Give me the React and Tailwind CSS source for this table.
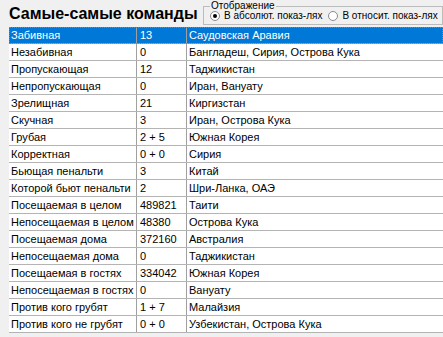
const rows = [
  ["Забивная", "13", "Саудовская Аравия"],
  ["Незабивная", "0", "Бангладеш, Сирия, Острова Кука"],
  ["Пропускающая", "12", "Таджикистан"],
  ["Непропускающая", "0", "Иран, Вануату"],
  ["Зрелищная", "21", "Киргизстан"],
  ["Скучная", "3", "Иран, Острова Кука"],
  ["Грубая", "2 + 5", "Южная Корея"],
  ["Корректная", "0 + 0", "Сирия"],
  ["Бьющая пенальти", "3", "Китай"],
  ["Которой бьют пенальти", "2", "Шри-Ланка, ОАЭ"],
  ["Посещаемая в целом", "489821", "Таити"],
  ["Непосещаемая в целом", "48380", "Острова Кука"],
  ["Посещаемая дома", "372160", "Австралия"],
  ["Непосещаемая дома", "0", "Таджикистан"],
  ["Посещаемая в гостях", "334042", "Южная Корея"],
  ["Непосещаемая в гостях", "0", "Вануату"],
  ["Против кого грубят", "1 + 7", "Малайзия"],
  ["Против кого не грубят", "0 + 0", "Узбекистан, Острова Кука"],
];

function Radio({ checked, label }) {
  return (
    <label className="flex items-center gap-[4px] whitespace-nowrap">
      <span className="shrink-0 w-[10px] h-[10px] rounded-full border border-[#8a8a8a] bg-white flex items-center justify-center">
        {checked && <span className="w-[4px] h-[4px] rounded-full bg-black" />}
      </span>
      <span>{label}</span>
    </label>
  );
}

export default function App() {
  return (
    <div className="w-[443px] h-[337px] bg-[#f0f0f0] overflow-hidden font-['Liberation_Sans',Arial,sans-serif] text-black">
      <div className="flex items-start h-[27px]">
        <h1 className="shrink-0 w-[203px] pl-[9px] pt-[4px] text-[16px] font-bold leading-[20px] whitespace-nowrap">
          Самые-самые команды
        </h1>
        <fieldset className="shrink-0 w-[238px] h-[25px] border border-[#bcbcbc] pl-[6px] pr-[4px] text-[10px] leading-[12px]">
          <legend className="px-[1px] text-[10px] leading-[12px] whitespace-nowrap">Отображение</legend>
          <div className="flex items-center gap-[6px] -mt-[2px]">
            <Radio checked label="В абсолют. показ-лях" />
            <Radio label="В относит. показ-лях" />
          </div>
        </fieldset>
      </div>
      <div className="ml-[9px] text-[11px] leading-[16px]">
        {rows.map(([a, b, c], i) => {
          const sel = i === 0;
          return (
            <div
              key={a}
              className={
                sel
                  ? "flex h-[17px] bg-[#0078d7] text-white border-b border-[#a0a0a0] outline-1 outline-dotted outline-[#c08000] -outline-offset-1"
                  : "flex h-[17px] bg-white border-b border-[#b4b4b4]"
              }
            >
              <div className="w-[128px] pl-[2px] border-r border-[#a0a0a0] whitespace-nowrap overflow-hidden">{a}</div>
              <div className="w-[50px] pl-[3px] border-r border-[#a0a0a0] whitespace-nowrap overflow-hidden">{b}</div>
              <div className="flex-1 pl-[2px] whitespace-nowrap overflow-hidden">{c}</div>
            </div>
          );
        })}
      </div>
    </div>
  );
}
